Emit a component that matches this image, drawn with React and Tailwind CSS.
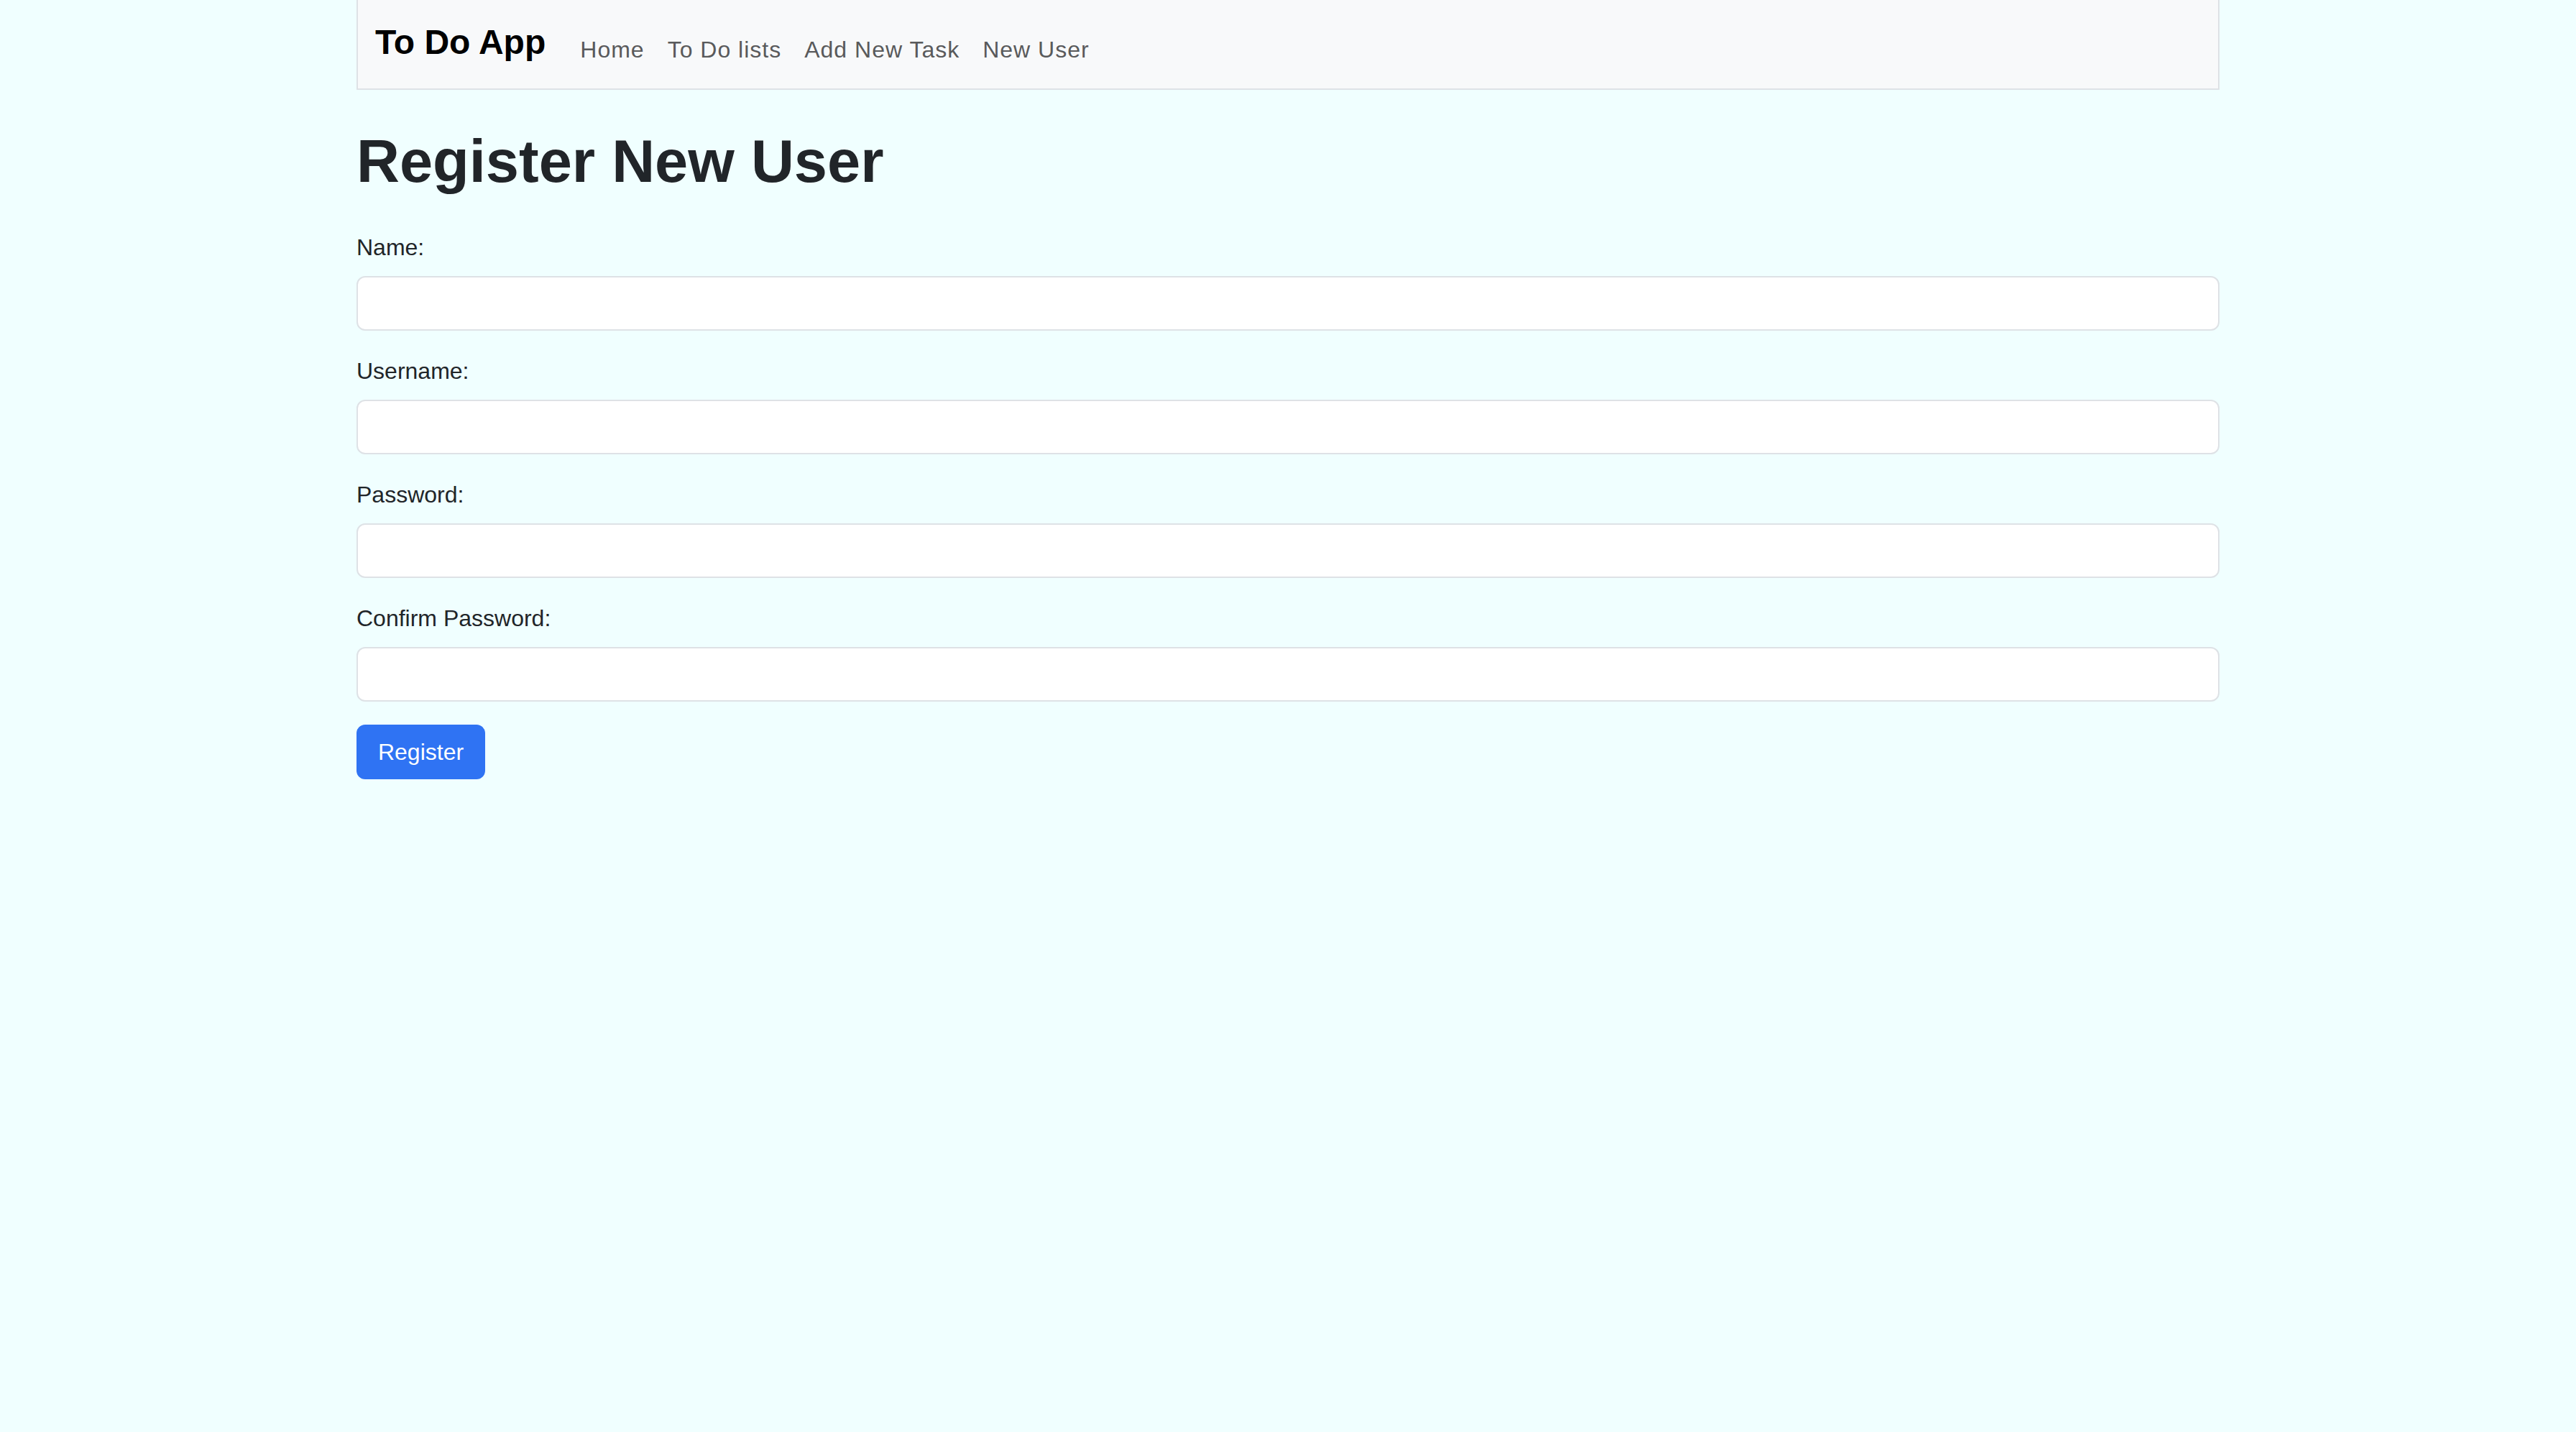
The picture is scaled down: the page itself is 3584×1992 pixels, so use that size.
import React from "react";

const links = ["Home", "To Do lists", "Add New Task", "New User"];
const fields = [
  { label: "Name:", type: "text" },
  { label: "Username:", type: "text" },
  { label: "Password:", type: "password" },
  { label: "Confirm Password:", type: "password" },
];

export default function App() {
  return (
    <div className="min-h-screen bg-[#f0ffff] font-['Liberation_Sans',Arial,sans-serif] text-[#212529]">
      <div className="w-[2592px] mx-auto">
        <nav className="flex items-start h-[125px] bg-[#f8f9fa] border-x-2 border-b-2 border-[#dee2e6] pl-[24px]">
          <a className="mt-[23px] mr-[32px] text-[48px] leading-[72px] font-bold text-black">
            To Do App
          </a>
          <div className="flex mt-[45px]">
            {links.map((name) => (
              <a
                key={name}
                className="px-[16px] text-[32px] leading-[48px] tracking-[1px] text-[#595a5b] cursor-pointer"
              >
                {name}
              </a>
            ))}
          </div>
        </nav>

        <h1 className="mt-[51px] mb-[46px] text-[83px] leading-[98px] font-bold">
          Register New User
        </h1>

        <form>
          {fields.map((f) => (
            <div key={f.label} className="mb-[32px]">
              <label className="block mb-[16px] text-[32px] leading-[48px]">
                {f.label}
              </label>
              <input
                type={f.type}
                className="block w-full h-[76px] px-[24px] bg-white border-2 border-[#dee2e6] rounded-[12px] text-[32px] outline-none"
              />
            </div>
          ))}
          <button
            type="button"
            className="w-[179px] h-[76px] rounded-[12px] bg-[#2f73f3] text-white text-[32px] leading-[48px]"
          >
            Register
          </button>
        </form>
      </div>
    </div>
  );
}
